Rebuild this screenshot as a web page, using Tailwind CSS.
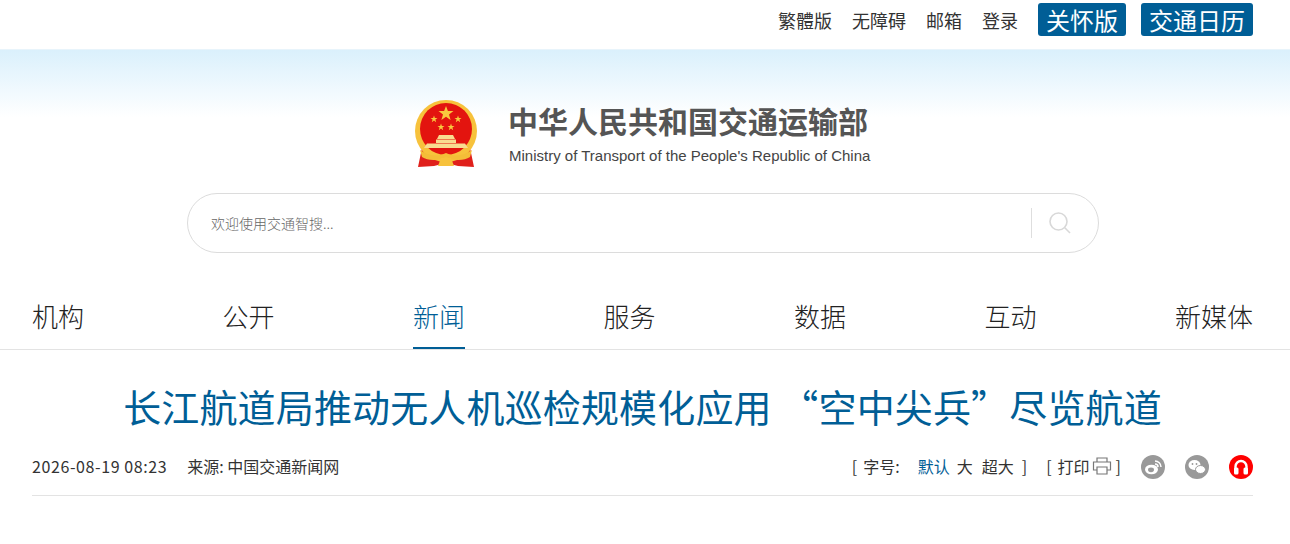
<!DOCTYPE html>
<html lang="zh-CN">
<head>
    <meta charset="UTF-8">
    <title>长江航道局推动无人机巡检规模化应用</title>
    <script src="https://cdn.jsdelivr.net/npm/@tailwindcss/browser@4"></script>
</head>
<body class="bg-white h-[544px] overflow-hidden text-[#333] font-['Noto_Sans_CJK_SC','Liberation_Sans',sans-serif]">
    <!-- top links -->
    <div class="h-[49px] w-[1221px] ml-[32px] flex items-start justify-end pt-[3px]">
        <a class="mt-[4px] mr-[20px] text-[18px] leading-[26px]">繁體版</a>
        <a class="mt-[4px] mr-[20px] text-[18px] leading-[26px]">无障碍</a>
        <a class="mt-[4px] mr-[20px] text-[18px] leading-[26px]">邮箱</a>
        <a class="mt-[4px] mr-[20px] text-[18px] leading-[26px]">登录</a>
        <a class="h-[33px] px-[8px] mr-[15px] bg-[#005e96] rounded-[3px] text-white text-[24px] leading-[33px]">关怀版</a>
        <a class="h-[33px] px-[8px] bg-[#005e96] rounded-[3px] text-white text-[24px] leading-[33px]">交通日历</a>
    </div>

    <!-- header -->
    <div class="h-[250px] bg-gradient-to-b from-[#daf0fc] to-white to-[27%] border-t border-[#e8f4fb]">
        <div class="pt-[50px] pl-[414px] flex items-start">
            <svg width="64" height="68" viewBox="0 0 64 68" class="shrink-0">
                <path d="M8 48 L4 67 L20 66 L32 63 L44 66 L60 67 L56 48Z" fill="#e0201b"/>
                <circle cx="32" cy="31" r="31" fill="#f7c23c"/>
                <circle cx="32" cy="29" r="26" fill="#e3140f"/>
                <polygon points="32,6 33.9,11 39.5,11 35,14.6 36.6,20 32,16.8 27.4,20 29,14.6 24.5,11 30.1,11" fill="#f9c93e"/>
                <polygon points="20,15.5 20.9,18 23.5,18 21.4,19.6 22.2,22.2 20,20.6 17.8,22.2 18.6,19.6 16.5,18 19.1,18" fill="#f9c93e"/>
                <polygon points="44,15.5 44.9,18 47.5,18 45.4,19.6 46.2,22.2 44,20.6 41.8,22.2 42.6,19.6 40.5,18 43.1,18" fill="#f9c93e"/>
                <polygon points="27,23.5 27.9,26 30.5,26 28.4,27.6 29.2,30.2 27,28.6 24.8,30.2 25.6,27.6 23.5,26 26.1,26" fill="#f9c93e"/>
                <polygon points="37,23.5 37.9,26 40.5,26 38.4,27.6 39.2,30.2 37,28.6 34.8,30.2 35.6,27.6 33.5,26 36.1,26" fill="#f9c93e"/>
                <path d="M25 35 H39 L41 39 H23Z M22 39.5 H42 V43 H22Z M13 43.5 H51 L54 48 H10Z" fill="#f9dc90"/>
                <path d="M6 50 C14 56 24 57 32 53 C40 57 50 56 58 50 L56 57 C50 61 40 61 32 57 C24 61 14 61 8 57Z" fill="#f4bd38"/>
                <path d="M27 58 H37 L40 66 H24Z" fill="#f7c23c"/>
            </svg>
            <div class="ml-[31px]">
                <div class="text-[30px] leading-[40px] font-bold text-[#555] -ml-px whitespace-nowrap">中华人民共和国交通运输部</div>
                <div class="mt-[6px] text-[15px] leading-[20px] text-[#444] font-['Liberation_Sans',sans-serif] whitespace-nowrap">Ministry of Transport of the People's Republic of China</div>
            </div>
        </div>
        <div class="mt-[25px] ml-[187px] w-[912px] h-[60px] rounded-full border border-[#dcdcdc] bg-white flex items-center">
            <span class="ml-[23px] flex-1 text-[14px] font-light text-[#666]">欢迎使用交通智搜...</span>
            <span class="w-px h-[30px] bg-[#dedede]"></span>
            <svg width="24" height="24" viewBox="0 0 24 24" fill="none" stroke="#d8d8d8" stroke-width="1.6" class="ml-[16px] mr-[26px]">
                <circle cx="10.5" cy="10.5" r="8.5"/>
                <path d="M16.8 16.8 L22 22"/>
            </svg>
        </div>
    </div>

    <!-- nav -->
    <div class="h-[51px] border-b border-[#e3e3e3]">
        <div class="w-[1221px] ml-[32px] flex justify-between text-[26px] leading-[34px] font-light text-[#222]">
            <a class="h-[50px]">机构</a>
            <a class="h-[50px]">公开</a>
            <a class="h-[50px] text-[#005e96] border-b-2 border-[#005e96]">新闻</a>
            <a class="h-[50px]">服务</a>
            <a class="h-[50px]">数据</a>
            <a class="h-[50px]">互动</a>
            <a class="h-[50px]">新媒体</a>
        </div>
    </div>

    <!-- article head -->
    <div class="w-[1221px] ml-[32px]">
        <h1 class="pt-[28px] text-center text-[38px] leading-[56px] tracking-[0.15px] text-[#005e96] whitespace-nowrap">长江航道局推动无人机巡检规模化应用 “空中尖兵”尽览航道</h1>
        <div class="mt-[13px] h-[49px] border-b border-[#e3e3e3] flex items-start pt-[8px] text-[16px] leading-[22px]">
            <span class="tracking-[0.6px]">2026-08-19 08:23</span>
            <span class="ml-[20px]">来源: 中国交通新闻网</span>
            <span class="ml-auto">[</span>
            <span class="ml-[6px]">字号:</span>
            <span class="ml-[18px] text-[#005e96]">默认</span>
            <span class="ml-[7px]">大</span>
            <span class="ml-[9px]">超大</span>
            <span class="ml-[8px]">]</span>
            <span class="ml-[19px]">[</span>
            <span class="ml-[6px]">打印</span>
            <svg width="20" height="18" viewBox="0 0 20 18" fill="none" stroke="#777" stroke-width="1.2" class="ml-[2px] mt-[2px]">
                <path d="M5 5 V1 H15 V5 M5 13 H1.5 V5 H18.5 V13 H15 M5 10 H15 V17 H5Z"/>
            </svg>
            <span class="ml-[4px]">]</span>
            <svg width="24" height="24" viewBox="0 0 24 24" class="ml-[20px]">
                <circle cx="12" cy="12" r="12" fill="#999"/>
                <ellipse cx="10.5" cy="14.5" rx="6.5" ry="4.8" fill="#fff"/>
                <ellipse cx="10" cy="14.8" rx="3" ry="2.4" fill="#999"/>
                <path d="M14 6 A6 6 0 0 1 20 12 M14 9 A3 3 0 0 1 17 12" stroke="#fff" stroke-width="1.5" fill="none"/>
            </svg>
            <svg width="24" height="24" viewBox="0 0 24 24" class="ml-[20px]">
                <circle cx="12" cy="12" r="12" fill="#999"/>
                <ellipse cx="9.5" cy="10" rx="6" ry="5" fill="#fff"/>
                <ellipse cx="15.5" cy="14.5" rx="5" ry="4" fill="#fff" stroke="#999"/>
                <circle cx="7.5" cy="9" r="0.9" fill="#999"/>
                <circle cx="11.5" cy="9" r="0.9" fill="#999"/>
            </svg>
            <svg width="24" height="24" viewBox="0 0 24 24" class="ml-[20px]">
                <circle cx="12" cy="12" r="12" fill="#f00"/>
                <path d="M6.5 15 V11.5 A5.5 5.5 0 0 1 17.5 11.5 V15" stroke="#fff" stroke-width="2.4" fill="none"/>
                <rect x="5" y="12.5" width="4.5" height="7" rx="1.5" fill="#fff"/>
                <rect x="14.5" y="12.5" width="4.5" height="7" rx="1.5" fill="#fff"/>
            </svg>
        </div>
    </div>
</body>
</html>
